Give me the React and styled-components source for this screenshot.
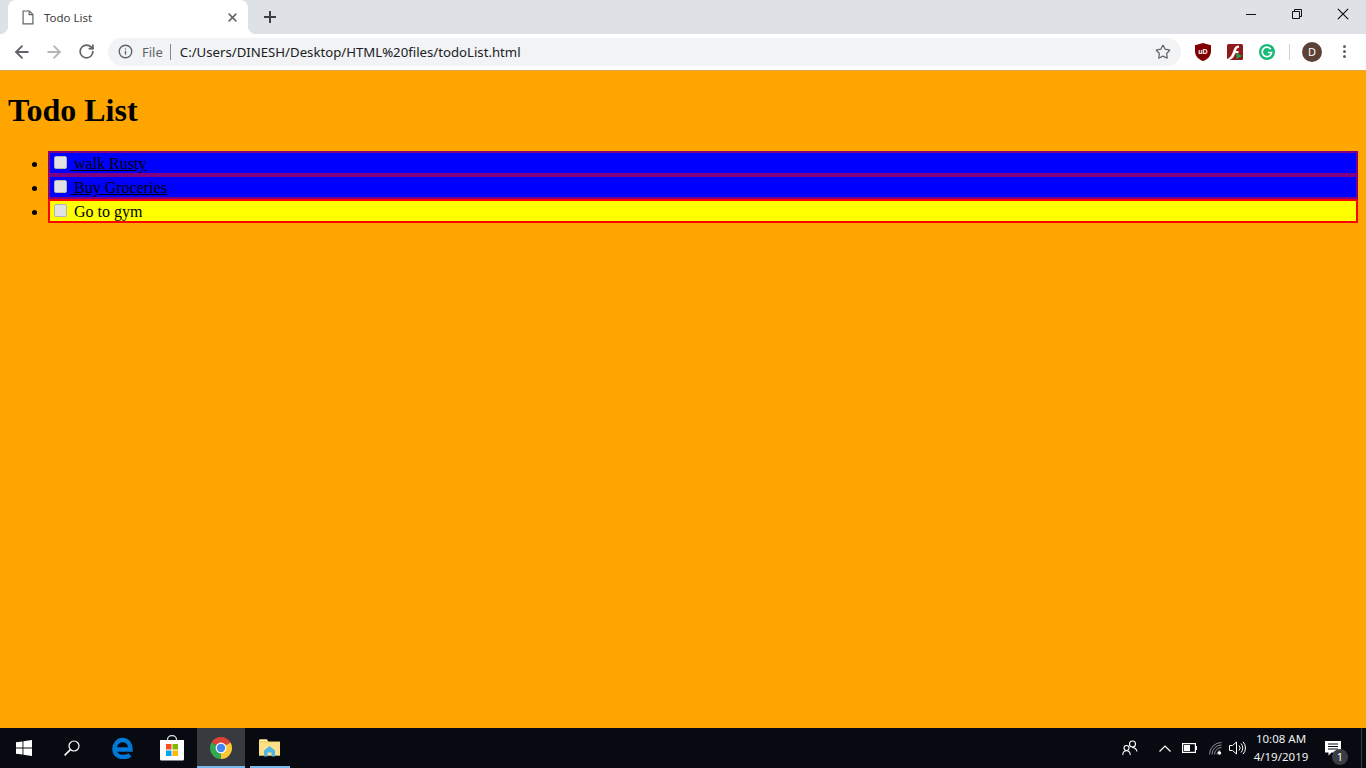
import React from 'react';
import styled, { createGlobalStyle } from 'styled-components';
import { ArrowLeft, ArrowRight, RotateCw, Info, Star } from 'lucide-react';

const GlobalStyle = createGlobalStyle`
  html, body {
    margin: 0;
    padding: 0;
    height: 100%;
    overflow: hidden;
  }
`;

const Screen = styled.div`
  width: 1366px;
  height: 768px;
  display: flex;
  flex-direction: column;
  overflow: hidden;
  background: #ffa500;
`;

/* browser window */

const TabStrip = styled.div`
  height: 34px;
  flex: none;
  display: flex;
  background: #dee1e6;
  padding-left: 8px;
  font-family: 'Noto Sans', sans-serif;
`;

const Tab = styled.div`
  position: relative;
  width: 240px;
  height: 34px;
  box-sizing: border-box;
  display: flex;
  align-items: center;
  padding: 0 11px 0 14px;
  background: #fff;
  border-radius: 8px 8px 0 0;
  color: #3c4043;
  font-size: 11.5px;

  &::before,
  &::after {
    content: '';
    position: absolute;
    bottom: 0;
    width: 8px;
    height: 8px;
  }
  &::before {
    left: -8px;
    background: radial-gradient(circle at 0 0, transparent 8px, #fff 8.5px);
  }
  &::after {
    right: -8px;
    background: radial-gradient(circle at 100% 0, transparent 8px, #fff 8.5px);
  }
`;

const TabTitle = styled.span`
  flex: 1;
  margin-left: 10px;
`;

const NewTab = styled.div`
  width: 26px;
  height: 34px;
  margin-left: 9px;
  display: flex;
  align-items: center;
  justify-content: center;
`;

const WindowControls = styled.div`
  margin-left: auto;
  display: flex;
  height: 28px;
`;

const WindowButton = styled.div`
  width: 46px;
  display: flex;
  align-items: center;
  justify-content: center;
`;

const Toolbar = styled.div`
  height: 37px;
  flex: none;
  box-sizing: border-box;
  display: flex;
  align-items: center;
  padding-bottom: 1px;
  background: #fff;
  border-bottom: 1px solid #dfa63a;
  font-family: 'Noto Sans', sans-serif;
`;

const NavButton = styled.div`
  width: 32px;
  height: 32px;
  margin-left: ${({ $first }) => ($first ? '6px' : '0')};
  display: flex;
  align-items: center;
  justify-content: center;
  color: ${({ $disabled }) => ($disabled ? '#b4b6b9' : '#5f6368')};
`;

const Omnibox = styled.div`
  width: 1073px;
  height: 28px;
  margin-left: 6px;
  box-sizing: border-box;
  display: flex;
  align-items: center;
  padding: 0 10px 0 10px;
  background: #f1f3f4;
  border-radius: 14px;
  color: #5f6368;
`;

const SchemeLabel = styled.span`
  margin-left: 9px;
  font-size: 13px;
  color: #5f6368;
`;

const Divider = styled.span`
  width: 1px;
  height: 16px;
  margin: 0 9px 0 7px;
  background: #85888c;
`;

const Url = styled.span`
  flex: 1;
  font-size: 13.2px;
  color: #202124;
  white-space: nowrap;
`;

const Extensions = styled.div`
  display: flex;
  align-items: center;
  margin-left: 6px;
`;

const ExtensionSlot = styled.div`
  width: 32px;
  display: flex;
  justify-content: center;
`;

const ToolbarRule = styled.span`
  width: 1px;
  height: 16px;
  margin: 0 12px 0 6px;
  background: #d0d2d5;
`;

const Avatar = styled.div`
  width: 20px;
  height: 20px;
  border-radius: 50%;
  background: #5d4037;
  color: #fff;
  font-size: 11px;
  line-height: 20px;
  text-align: center;
`;

const MenuDots = styled.div`
  margin-left: 21px;
  display: flex;
  flex-direction: column;
  gap: 2px;

  span {
    width: 3px;
    height: 3px;
    border-radius: 50%;
    background: #5f6368;
  }
`;

/* the page itself */

const Page = styled.main`
  flex: 1;
  min-height: 0;
  padding: 0 8px;
  background: #ffa500;
  color: #000;
  font-family: 'Liberation Serif', 'Times New Roman', serif;
  font-size: 16px;
`;

const Heading = styled.h1`
  margin: 21.44px 0;
  font-size: 32px;
  font-weight: 700;
`;

const TodoList = styled.ul`
  margin: 0;
  padding-left: 40px;
`;

const TodoItem = styled.li`
  border: 2px solid ${({ $done }) => ($done ? '#800080' : '#ff0000')};
  background: ${({ $done }) => ($done ? '#0000ff' : '#ffff00')};
`;

const TodoCheck = styled.input`
  appearance: none;
  width: 13px;
  height: 13px;
  margin: 3px 3px 0 4px;
  box-sizing: border-box;
  background: #e2e2e2;
  border: 1px solid #b3b3b3;
  border-radius: 2px;
`;

const TodoText = styled.span`
  text-decoration: ${({ $done }) => ($done ? 'underline' : 'none')};
`;

/* windows taskbar */

const Taskbar = styled.footer`
  height: 40px;
  flex: none;
  display: flex;
  align-items: stretch;
  background: #070b11;
  color: #fff;
  font-family: 'Noto Sans', sans-serif;
`;

const TaskSlot = styled.div`
  position: relative;
  width: 48px;
  margin-left: ${({ $gap }) => $gap || 0};
  display: flex;
  align-items: center;
  justify-content: center;
  background: ${({ $active }) => ($active ? '#373a3f' : 'transparent')};

  &::after {
    content: '';
    display: ${({ $active, $running }) => ($active || $running ? 'block' : 'none')};
    position: absolute;
    bottom: 0;
    left: ${({ $running }) => ($running ? '4px' : '0')};
    right: ${({ $running }) => ($running ? '4px' : '0')};
    height: 2px;
    background: #76b9ed;
  }
`;

const Tray = styled.div`
  margin-left: auto;
  display: flex;
  align-items: center;
`;

const TrayIcon = styled.div`
  width: ${({ $w }) => $w};
  margin-right: ${({ $after }) => $after || 0};
  display: flex;
  justify-content: center;
`;

const Clock = styled.div`
  width: 64px;
  text-align: center;
  font-size: 11.5px;
  line-height: 18px;
  color: #f0f0f0;
`;

const Notifications = styled.div`
  position: relative;
  width: 40px;
  margin-right: 8px;
  display: flex;
  justify-content: center;
`;

const NotificationBadge = styled.span`
  position: absolute;
  top: 8px;
  left: 19px;
  width: 16px;
  height: 16px;
  border-radius: 50%;
  background: #3a3d41;
  font-size: 11px;
  line-height: 16px;
  text-align: center;
`;

const ShowDesktop = styled.div`
  width: 5px;
  height: 40px;
  box-sizing: border-box;
  border-left: 1px solid #3a3d42;
`;

/* drawings */

const PageIcon = () => (
  <svg width="12" height="15" viewBox="0 0 12 15" fill="none" stroke="#5f6368" strokeWidth="1.2">
    <path d="M1.1 1h6.4l3.4 3.4v9.5H1.1z" />
    <path d="M7.2 1v3.7h3.7" />
  </svg>
);

const CrossIcon = ({ size = 10, color = '#5f6368', width = 1.6 }) => (
  <svg width={size} height={size} viewBox="0 0 10 10" stroke={color} strokeWidth={width}>
    <path d="M.7.7l8.6 8.6M9.3.7L.7 9.3" />
  </svg>
);

const PlusIcon = () => (
  <svg width="12" height="12" viewBox="0 0 12 12" stroke="#3c4043" strokeWidth="2">
    <path d="M6 0v12M0 6h12" />
  </svg>
);

const MinimizeIcon = () => (
  <svg width="10" height="10" viewBox="0 0 10 10" stroke="#111" strokeWidth="1">
    <path d="M0 5.5h10" />
  </svg>
);

const RestoreIcon = () => (
  <svg width="10" height="10" viewBox="0 0 10 10" fill="none" stroke="#111" strokeWidth="1">
    <path d="M.5 2.5h7v7h-7z" />
    <path d="M2.5 2.5v-2h7v7h-2" />
  </svg>
);

const ShieldIcon = () => (
  <svg width="16" height="18" viewBox="0 0 16 18">
    <path d="M8 0l8 2.2v6C16 13 12.5 16.500 8 18 3.500 16.500 0 13 0 8.200v-6z" fill="#800000" />
    <text x="8" y="11" fontSize="7" fontWeight="700" fill="#fff" textAnchor="middle" fontFamily="Liberation Sans, sans-serif">uD</text>
  </svg>
);

const FlashIcon = () => (
  <svg width="16" height="16" viewBox="0 0 16 16">
    <rect width="16" height="16" rx="1.500" fill="#8e1a1c" />
    <path d="M0 15C4 14 5.500 9 7 5 8 2.500 9.500 1.500 12 1.500V3.800C10 3.800 9.500 5.500 9 7H11.500V9.200H8.300C7 13 5 15.500 2 16H0z" fill="#fff" />
    <path d="M9.500 9l5.500 3-5.500 3z" fill="#13a84a" />
  </svg>
);

const GrammarlyIcon = () => (
  <svg width="16" height="16" viewBox="0 0 16 16">
    <circle cx="8" cy="8" r="8" fill="#17b978" />
    <path d="M11.800 5.200A4.700 4.700 0 1 0 12.600 8.500H8.800" fill="none" stroke="#fff" strokeWidth="1.700" />
  </svg>
);

const WindowsLogo = () => (
  <svg width="16" height="16" viewBox="0 0 16 16" fill="#fff">
    <path d="M0 2.300l6.500-.9v6.200H0zM7.400 1.300L16 0v7.600H7.400zM0 8.400h6.500v6.200L0 13.700zM7.400 8.400H16V16l-8.600-1.300z" />
  </svg>
);

const SearchIcon = () => (
  <svg width="16" height="16" viewBox="0 0 16 16" fill="none" stroke="#fff" strokeWidth="1.200">
    <circle cx="10" cy="6" r="5" />
    <path d="M6.400 9.600L.6 15.400" strokeWidth="1.500" />
  </svg>
);

const EdgeIcon = () => (
  <svg width="22" height="22" viewBox="0 0 22 22" fill="none" stroke="#0078d7" strokeWidth="4.500">
    <path d="M4 12.500h14.500C18.500 7 15.500 3 10.500 3 6 3 2.500 7 2.500 12c0 5 3.500 8 8.500 8 3 0 5.500-.8 7-2" />
  </svg>
);

const StoreIcon = () => (
  <svg width="24" height="26" viewBox="0 0 24 26">
    <path d="M7.500 6V4.500a4.500 4 0 0 1 9 0V6" fill="none" stroke="#d8d8d8" strokeWidth="1.300" />
    <path d="M0 5h24v19a1.500 1.500 0 0 1-1.500 1.500h-21A1.500 1.500 0 0 1 0 24z" fill="#fff" />
    <rect x="6" y="9" width="5.500" height="5.500" fill="#f25022" />
    <rect x="12.500" y="9" width="5.500" height="5.500" fill="#7fba00" />
    <rect x="6" y="15.500" width="5.500" height="5.500" fill="#00a4ef" />
    <rect x="12.500" y="15.500" width="5.500" height="5.500" fill="#ffb900" />
  </svg>
);

const ChromeIcon = () => (
  <svg width="24" height="24" viewBox="0 0 24 24">
    <path d="M12 12L2.470 6.500A11 11 0 0 1 21.530 6.500z" fill="#db4437" />
    <path d="M12 12L21.530 6.500A11 11 0 0 1 12 23z" fill="#fcc934" />
    <path d="M12 12L12 23A11 11 0 0 1 2.470 6.500z" fill="#34a853" />
    <circle cx="12" cy="12" r="5.400" fill="#fff" />
    <circle cx="12" cy="12" r="4.200" fill="#4285f4" />
  </svg>
);

const ExplorerIcon = () => (
  <svg width="22" height="20" viewBox="0 0 22 20">
    <path d="M0 1.500h8l1.500 2H21v14H0z" fill="#f6d365" />
    <path d="M0 4.500h21v13H0z" fill="#fbe08a" />
    <path d="M1 1.500h7v1.500H1z" fill="#fff3c4" />
    <path d="M5 18.500v-6l5.500-4.500 5.500 4.500v6h-3.500v-4h-4v4z" fill="#4fb4e8" />
  </svg>
);

const PeopleIcon = () => (
  <svg width="16" height="16" viewBox="0 0 16 16" fill="none" stroke="#fff" strokeWidth="1.100">
    <circle cx="10.500" cy="4" r="3" />
    <circle cx="4.500" cy="8" r="2.500" />
    <path d="M.8 15c0-2.500 1.500-4.200 3.700-4.200S8.200 12.500 8.200 15M10 7.500c2.500 0 4.500 1.500 5 4" />
  </svg>
);

const CaretIcon = () => (
  <svg width="12" height="7" viewBox="0 0 12 7" fill="none" stroke="#fff" strokeWidth="1.200">
    <path d="M.5 6.500L6 1l5.500 5.500" />
  </svg>
);

const BatteryIcon = () => (
  <svg width="15" height="10" viewBox="0 0 15 10">
    <rect x=".6" y=".6" width="12.800" height="8.800" fill="none" stroke="#fff" strokeWidth="1.200" />
    <rect x="2" y="2" width="6" height="6" fill="#fff" />
    <rect x="14" y="3" width="1" height="4" fill="#fff" />
  </svg>
);

const WifiIcon = () => (
  <svg width="13" height="13" viewBox="0 0 13 13" fill="none" stroke="#8b8e92" strokeWidth="1">
    <path d="M.5 12.500A12 12 0 0 1 12.500.5M3 12.500A9.500 9.500 0 0 1 12.500 3M5.500 12.500a7 7 0 0 1 7-7M8 12.500a4.500 4.500 0 0 1 3-4.200" />
    <circle cx="10.500" cy="11" r="1.700" fill="#fff" stroke="none" />
  </svg>
);

const VolumeIcon = () => (
  <svg width="17" height="14" viewBox="0 0 17 14" fill="none" stroke="#fff" strokeWidth="1">
    <path d="M.5 4.500h3L7.500 1v12l-4-3.500h-3z" />
    <path d="M10 4.500a3.500 3.500 0 0 1 0 5M12 2.500a6.500 6.500 0 0 1 0 9M14 .8a9 9 0 0 1 0 12.400" />
  </svg>
);

const NotificationIcon = () => (
  <svg width="16" height="15" viewBox="0 0 16 15">
    <path d="M0 0h16v11.500H6.500L3.500 14.500v-3H0z" fill="#fff" />
    <path d="M3 3h10M3 5.500h10M3 8h10" stroke="#070b11" strokeWidth="1" />
  </svg>
);

const todos = [
  { id: 1, text: ' walk Rusty', done: true },
  { id: 2, text: ' Buy Groceries', done: true },
  { id: 3, text: ' Go to gym', done: false },
];

const App = () => (
  <Screen>
    <GlobalStyle />

    <TabStrip>
      <Tab>
        <PageIcon />
        <TabTitle>Todo List</TabTitle>
        <CrossIcon size={9} />
      </Tab>
      <NewTab>
        <PlusIcon />
      </NewTab>
      <WindowControls>
        <WindowButton>
          <MinimizeIcon />
        </WindowButton>
        <WindowButton>
          <RestoreIcon />
        </WindowButton>
        <WindowButton>
          <CrossIcon size={12} color="#111" width={1} />
        </WindowButton>
      </WindowControls>
    </TabStrip>

    <Toolbar>
      <NavButton $first>
        <ArrowLeft size={20} strokeWidth={2.2} />
      </NavButton>
      <NavButton $disabled>
        <ArrowRight size={20} strokeWidth={2.2} />
      </NavButton>
      <NavButton>
        <RotateCw size={17} strokeWidth={2.4} />
      </NavButton>
      <Omnibox>
        <Info size={15} strokeWidth={2.2} />
        <SchemeLabel>File</SchemeLabel>
        <Divider />
        <Url>C:/Users/DINESH/Desktop/HTML%20files/todoList.html</Url>
        <Star size={16} strokeWidth={1.8} />
      </Omnibox>
      <Extensions>
        <ExtensionSlot>
          <ShieldIcon />
        </ExtensionSlot>
        <ExtensionSlot>
          <FlashIcon />
        </ExtensionSlot>
        <ExtensionSlot>
          <GrammarlyIcon />
        </ExtensionSlot>
        <ToolbarRule />
        <Avatar>D</Avatar>
        <MenuDots>
          <span />
          <span />
          <span />
        </MenuDots>
      </Extensions>
    </Toolbar>

    <Page>
      <Heading>Todo List</Heading>
      <TodoList>
        {todos.map(todo => (
          <TodoItem key={todo.id} $done={todo.done}>
            <TodoCheck type="checkbox" />
            <TodoText $done={todo.done}>{todo.text}</TodoText>
          </TodoItem>
        ))}
      </TodoList>
    </Page>

    <Taskbar>
      <TaskSlot>
        <WindowsLogo />
      </TaskSlot>
      <TaskSlot>
        <SearchIcon />
      </TaskSlot>
      <TaskSlot $gap="3px">
        <EdgeIcon />
      </TaskSlot>
      <TaskSlot $gap="1px">
        <StoreIcon />
      </TaskSlot>
      <TaskSlot $gap="1px" $active>
        <ChromeIcon />
      </TaskSlot>
      <TaskSlot $gap="1px" $running>
        <ExplorerIcon />
      </TaskSlot>
      <Tray>
        <TrayIcon $w="24px" $after="15px">
          <PeopleIcon />
        </TrayIcon>
        <TrayIcon $w="16px">
          <CaretIcon />
        </TrayIcon>
        <TrayIcon $w="32px">
          <BatteryIcon />
        </TrayIcon>
        <TrayIcon $w="20px">
          <WifiIcon />
        </TrayIcon>
        <TrayIcon $w="24px">
          <VolumeIcon />
        </TrayIcon>
        <Clock>
          <div>10:08 AM</div>
          <div>4/19/2019</div>
        </Clock>
        <Notifications>
          <NotificationIcon />
          <NotificationBadge>1</NotificationBadge>
        </Notifications>
        <ShowDesktop />
      </Tray>
    </Taskbar>
  </Screen>
);

export default App;
